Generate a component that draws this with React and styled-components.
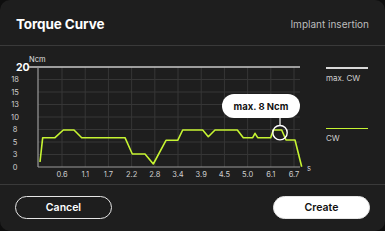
import React from "react";
import styled, { createGlobalStyle } from "styled-components";

const Global = createGlobalStyle`
  html, body { margin: 0; padding: 0; background: #0e0e0e; }
  body { font-family: Inter, "Noto Sans", Arial, sans-serif; }
  * { box-sizing: border-box; }
`;

const Card = styled.div`
  width: 385px;
  height: 231px;
  background: #1e1e1e;
  border-radius: 10px;
  display: flex;
  flex-direction: column;
  overflow: hidden;
`;

const Header = styled.div`
  height: 46px;
  display: flex;
  align-items: center;
  justify-content: space-between;
  padding: 3px 16px 0 16px;
  border-bottom: 1px solid #3a3a3a;
`;

const Title = styled.h1`
  margin: 0;
  font-size: 13.5px;
  font-weight: 700;
  color: #ffffff;
  letter-spacing: -0.1px;
`;

const Subtitle = styled.span`
  font-size: 10px;
  color: #bdbdbd;
`;

const ChartArea = styled.div`
  position: relative;
  height: 139px;
  display: flex;
  border-bottom: 1px solid #3a3a3a;
`;

const Plot = styled.svg`
  display: block;
  width: 318px;
  height: 138px;
  flex: none;
`;

const Legend = styled.div`
  margin-left: 8px;
  padding-top: 21px;
  width: 42px;
  display: flex;
  flex-direction: column;
  gap: 45px;
`;

const LegendItem = styled.div`
  display: flex;
  flex-direction: column;
  gap: 4px;
`;

const LegendLine = styled.div`
  height: 1.5px;
  width: 42px;
  background: ${(p) => p.$color};
`;

const LegendLabel = styled.span`
  font-size: 8px;
  line-height: 10px;
  color: #d0d0d0;
`;

const Bubble = styled.div`
  position: absolute;
  left: 222px;
  top: 48px;
  width: 78px;
  height: 24px;
  border-radius: 12px;
  background: #ffffff;
  color: #111;
  font-size: 9.5px;
  font-weight: 700;
  display: flex;
  align-items: center;
  justify-content: center;
`;

const Footer = styled.div`
  flex: 1;
  display: flex;
  align-items: flex-start;
  justify-content: space-between;
  padding: 11px 15px 0 15px;
`;

const Button = styled.button`
  width: 97px;
  height: 23px;
  border-radius: 12px;
  font-family: inherit;
  font-size: 10.5px;
  font-weight: 600;
  cursor: pointer;
  border: 1.5px solid #e6e6e6;
  background: ${(p) => (p.$primary ? "#ffffff" : "transparent")};
  color: ${(p) => (p.$primary ? "#111111" : "#ffffff")};
`;

const X0 = 38;
const X1 = 300;
const YT = 21;
const YB = 121;
const yLabels = ["20", "18", "15", "13", "10", "8", "5", "3", "0"];
const xLabels = ["0.6", "1.1", "1.7", "2.2", "2.8", "3.4", "3.9", "4.5", "5.0", "6.1", "6.7"];

const curve = [
  [40, 162], [42.7, 137.7], [55, 137.7], [63.3, 130], [74, 130], [81.7, 137.7],
  [125, 137.7], [132.3, 154], [145, 154], [153.3, 164], [166, 140.3], [177.7, 140.3],
  [182.7, 130], [202.7, 130], [208.3, 136.7], [215, 130], [237.3, 130], [243.3, 137.7],
  [252.7, 137.7], [255, 133.3], [257.7, 137.7], [270.7, 137.7], [273.3, 130], [281.7, 130],
  [286, 140], [295, 140], [301.7, 166.7],
].map(([x, y]) => `${x},${y - 46}`).join(" ");

function Chart() {
  return (
    <Plot viewBox="0 0 318 138">
      {yLabels.map((l, i) => {
        const y = YT + i * 12.5;
        return (
          <g key={l}>
            {i > 0 && i < 8 && <line x1={X0} x2={X1} y1={y} y2={y} stroke="#363636" strokeWidth="1" />}
            {i > 0 && (
              <text x="15" y={y + 2.5} fill="#cfcfcf" fontSize="7.5" textAnchor="middle" fontFamily="Inter, sans-serif">{l}</text>
            )}
          </g>
        );
      })}
      {xLabels.map((l, i) => {
        const x = 62 + i * 23.2;
        return (
          <g key={l}>
            <line x1={x} x2={x} y1={YT} y2={YB} stroke="#363636" strokeWidth="1" />
            <text x={x} y={131} fill="#cfcfcf" fontSize="7.5" textAnchor="middle" fontFamily="Inter, sans-serif">{l}</text>
          </g>
        );
      })}
      <text x="309" y="124.5" fill="#cfcfcf" fontSize="7.5" textAnchor="middle" fontFamily="Inter, sans-serif">s</text>
      <text x="29" y="16" fill="#e0e0e0" fontSize="7.5" fontFamily="Inter, sans-serif">Ncm</text>
      <text x="16" y="24.5" fill="#ffffff" fontSize="10.5" fontWeight="700" fontFamily="Inter, sans-serif">20</text>
      <line x1="29" x2={X1} y1={YT} y2={YT} stroke="#c8c8c8" strokeWidth="1.5" />
      <line x1={X0} x2={X0} y1={YT} y2={YB} stroke="#9a9a9a" strokeWidth="1.2" />
      <line x1={X0} x2={X1} y1={YB} y2={YB} stroke="#9a9a9a" strokeWidth="1.2" />
      <polyline points={curve} fill="none" stroke="#c6f432" strokeWidth="1.6" strokeLinejoin="round" />
      <line x1="280" x2="280" y1="72" y2="79" stroke="#ffffff" strokeWidth="1.2" />
      <circle cx="280" cy="86.7" r="7.2" fill="none" stroke="#ffffff" strokeWidth="1.4" />
    </Plot>
  );
}

export default function App() {
  return (
    <>
      <Global />
      <Card>
        <Header>
          <Title>Torque Curve</Title>
          <Subtitle>Implant insertion</Subtitle>
        </Header>
        <ChartArea>
          <Chart />
          <Legend>
            <LegendItem>
              <LegendLine $color="#d8d8d8" />
              <LegendLabel>max. CW</LegendLabel>
            </LegendItem>
            <LegendItem>
              <LegendLine $color="#c6f432" />
              <LegendLabel>CW</LegendLabel>
            </LegendItem>
          </Legend>
          <Bubble>max. 8 Ncm</Bubble>
        </ChartArea>
        <Footer>
          <Button>Cancel</Button>
          <Button $primary>Create</Button>
        </Footer>
      </Card>
    </>
  );
}
